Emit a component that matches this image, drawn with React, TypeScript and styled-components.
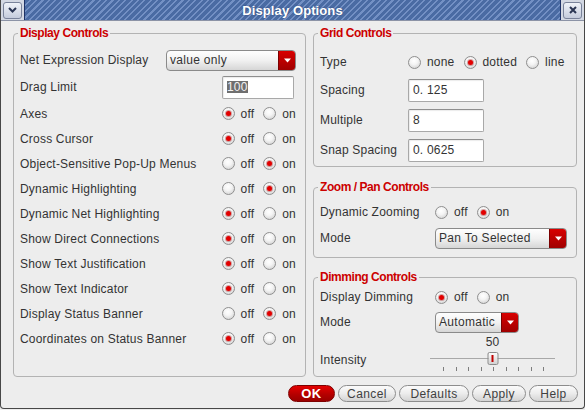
import React from 'react';
import styled, { createGlobalStyle } from 'styled-components';

const GlobalStyle = createGlobalStyle`
  html, body {
    margin: 0;
    padding: 0;
    background: #ededed;
  }
  body {
    font-family: "Liberation Sans", Arial, sans-serif;
  }
`;

const Window = styled.div`
  width: 585px;
  height: 409px;
  box-sizing: border-box;
  display: flex;
  flex-direction: column;
  background: #ededed;
  border: 1px solid #474747;
  border-top: none;
  border-radius: 0 0 4px 4px;
  color: #333;
  font-size: 12px;
  letter-spacing: 0.2px;
`;

const TitleBar = styled.div`
  display: flex;
  align-items: center;
  height: 20px;
  background: #d3d8e3;
  border-bottom: 1px solid #8c93a6;
`;

const TitleButton = styled.div`
  width: 19px;
  height: 17px;
  box-sizing: border-box;
  margin: 0 2px;
  border: 1px solid #79829a;
  border-radius: 3px;
  background: linear-gradient(#f0f3f9, #c4cbdc);
  display: flex;
  align-items: center;
  justify-content: center;
`;

const TitleCaption = styled.div`
  flex: 1;
  height: 20px;
  box-sizing: border-box;
  border-left: 1px solid #1e3266;
  border-right: 1px solid #1e3266;
  background: repeating-linear-gradient(
    135deg,
    #4a6ba3 0px,
    #4a6ba3 3px,
    #7390c4 3px,
    #7390c4 4.5px
  );
  display: flex;
  align-items: center;
  justify-content: center;
  color: #fff;
  font-weight: bold;
  font-size: 13px;
  letter-spacing: 0.1px;
  text-shadow: 0 0 2px #2c4478;
`;

const Body = styled.div`
  display: flex;
  gap: 7px;
  padding: 4px 7px 0 12px;
`;

const Column = styled.div`
  display: flex;
  flex-direction: column;
  width: 264px;
`;

const Group = styled.fieldset<{ $w?: number; $top: number; $bottom: number; $mt?: number }>`
  margin: ${p => p.$mt ?? 0}px 0 0 0;
  min-width: 0;
  width: ${p => (p.$w ? `${p.$w}px` : 'auto')};
  box-sizing: border-box;
  border: 1px solid #b3b3b3;
  border-radius: 4px;
  padding: ${p => p.$top}px 9px ${p => p.$bottom}px 6px;
`;

const Legend = styled.legend`
  padding: 0 2px;
  margin-left: -2px;
  font-weight: bold;
  color: #cc0000;
  font-size: 12px;
  line-height: 16px;
  letter-spacing: -0.45px;
`;

const Row = styled.div<{ $h: number; $label?: number }>`
  display: grid;
  grid-template-columns: ${p => (p.$label ? `${p.$label}px 1fr` : '1fr auto')};
  align-items: center;
  height: ${p => p.$h}px;
`;

const Label = styled.span<{ $shift?: number }>`
  white-space: nowrap;
  margin-top: ${p => p.$shift ?? 0}px;
`;

const Options = styled.div`
  display: flex;
  align-items: center;
  gap: 9px;
`;

const Option = styled.span`
  display: inline-flex;
  align-items: center;
  gap: 6px;
`;

const RadioDot = styled.span<{ $on: boolean }>`
  width: 13px;
  height: 13px;
  box-sizing: border-box;
  border-radius: 50%;
  border: 1px solid #8f8f8f;
  background: radial-gradient(circle at 45% 35%, #ffffff 0%, #f4f4f4 40%, #c9c9c9 100%);
  display: inline-flex;
  align-items: center;
  justify-content: center;
  &::after {
    content: '';
    display: ${p => (p.$on ? 'block' : 'none')};
    width: 5px;
    height: 5px;
    border-radius: 50%;
    background: #e20000;
    box-shadow: 0 0 0 1px rgba(140, 0, 0, 0.35);
  }
`;

const Combo = styled.div<{ $w: number }>`
  width: ${p => p.$w}px;
  height: 21px;
  box-sizing: border-box;
  border: 1px solid #8a8a8a;
  border-radius: 4px;
  background: linear-gradient(#fefefe, #f1f1f1 50%, #d6d6d6);
  display: flex;
  align-items: center;
  overflow: hidden;
  justify-self: start;
`;

const ComboText = styled.span`
  flex: 1;
  padding-left: 3px;
  font-size: 12px;
  letter-spacing: 0.3px;
  white-space: nowrap;
`;

const ComboArrow = styled.span`
  width: 16px;
  align-self: stretch;
  background: linear-gradient(#d80000, #a00000);
  border-left: 1px solid #7a0000;
  display: flex;
  align-items: center;
  justify-content: center;
`;

const Field = styled.div<{ $w: number; $mr?: number }>`
  width: ${p => p.$w}px;
  height: 23px;
  box-sizing: border-box;
  margin-right: ${p => p.$mr ?? 0}px;
  border: 1px solid #a8a8a8;
  border-top-color: #8e8e8e;
  border-radius: 2px;
  background: #fff;
  box-shadow: inset 1px 1px 1px rgba(0, 0, 0, 0.08);
  display: flex;
  align-items: center;
  padding-left: 4px;
  font-size: 12px;
`;

const Selected = styled.span`
  background: #6f6f6f;
  color: #f2f2f2;
  line-height: 12px;
`;

const SliderBox = styled.div`
  position: relative;
  width: 125px;
  height: 41px;
`;

const SliderValue = styled.span`
  position: absolute;
  top: 1px;
  transform: translateX(-50%);
  font-size: 12px;
  line-height: 12px;
`;

const Track = styled.div`
  position: absolute;
  left: 0;
  right: 0;
  top: 23px;
  height: 1px;
  background: #a8a8a8;
`;

const Thumb = styled.div`
  position: absolute;
  top: 17px;
  width: 11px;
  height: 13px;
  box-sizing: border-box;
  transform: translateX(-50%);
  border: 1px solid #8a8a8a;
  border-radius: 2px;
  background: linear-gradient(#fbfbfb, #d2d2d2);
  display: flex;
  justify-content: center;
  align-items: center;
  &::after {
    content: '';
    width: 2px;
    height: 7px;
    background: #c00000;
  }
`;

const Ticks = styled.div`
  position: absolute;
  left: 13px;
  right: 11px;
  top: 32px;
  display: flex;
  justify-content: space-between;
`;

const Tick = styled.span`
  width: 1px;
  height: 4px;
  background: #7d7d7d;
`;

const ButtonRow = styled.div`
  display: flex;
  justify-content: flex-end;
  gap: 3px;
  padding: 8px 6px 0 0;
`;

const Button = styled.div<{ $w: number; $primary?: boolean }>`
  width: ${p => p.$w}px;
  height: 17px;
  box-sizing: border-box;
  border-radius: 9px;
  border: 1px solid ${p => (p.$primary ? '#7e0000' : '#8c8c8c')};
  background: ${p =>
    p.$primary ? 'linear-gradient(#e40000, #b20000 60%, #9a0000)' : 'linear-gradient(#fbfbfb, #ececec 50%, #d3d3d3)'};
  color: ${p => (p.$primary ? '#fff' : '#404040')};
  font-weight: ${p => (p.$primary ? 'bold' : 'normal')};
  font-size: ${p => (p.$primary ? '13px' : '12px')};
  display: flex;
  align-items: center;
  justify-content: center;
  letter-spacing: 0.4px;
`;

const Radio = ({ options, value }: { options: string[]; value: string }) => (
  <Options>
    {options.map(o => (
      <Option key={o}>
        <RadioDot $on={o === value} />
        {o}
      </Option>
    ))}
  </Options>
);

const Select = ({ w, value }: { w: number; value: string }) => (
  <Combo $w={w}>
    <ComboText>{value}</ComboText>
    <ComboArrow>
      <svg width="7" height="5" viewBox="0 0 7 5">
        <path d="M0 0.5 H7 L3.5 4.5 Z" fill="#fff" />
      </svg>
    </ComboArrow>
  </Combo>
);

const Slider = ({ value }: { value: number }) => {
  const pos = `${value}%`;
  return (
    <SliderBox>
      <SliderValue style={{ left: pos }}>{value}</SliderValue>
      <Track />
      <Thumb style={{ left: pos }} />
      <Ticks>
        {Array.from({ length: 9 }).map((_, i) => (
          <Tick key={i} />
        ))}
      </Ticks>
    </SliderBox>
  );
};

const toggles: [string, string][] = [
  ['Axes', 'off'],
  ['Cross Cursor', 'off'],
  ['Object-Sensitive Pop-Up Menus', 'on'],
  ['Dynamic Highlighting', 'on'],
  ['Dynamic Net Highlighting', 'off'],
  ['Show Direct Connections', 'off'],
  ['Show Text Justification', 'off'],
  ['Show Text Indicator', 'off'],
  ['Display Status Banner', 'on'],
  ['Coordinates on Status Banner', 'off'],
];

const OnOff = ['off', 'on'];

export default function App() {
  return (
    <>
      <GlobalStyle />
      <Window>
        <TitleBar>
          <TitleButton>
            <svg width="9" height="6" viewBox="0 0 9 6">
              <path d="M1 1 L4.5 4.5 L8 1" stroke="#2b3654" strokeWidth="2" fill="none" />
            </svg>
          </TitleButton>
          <TitleCaption>Display Options</TitleCaption>
          <TitleButton>
            <svg width="8" height="8" viewBox="0 0 8 8">
              <path d="M1 1 L7 7 M7 1 L1 7" stroke="#2b3654" strokeWidth="2" fill="none" />
            </svg>
          </TitleButton>
        </TitleBar>

        <Body>
          <Group $w={294} $top={6} $bottom={0}>
            <Legend>Display Controls</Legend>
            <Row $h={26}>
              <Label>Net Expression Display</Label>
              <Select w={130} value="value only" />
            </Row>
            <Row $h={28}>
              <Label>Drag Limit</Label>
              <Field $w={72} $mr={2}>
                <Selected>100</Selected>
              </Field>
            </Row>
            {toggles.map(([label, v]) => (
              <Row $h={25} key={label}>
                <Label>{label}</Label>
                <Radio options={OnOff} value={v} />
              </Row>
            ))}
          </Group>

          <Column>
            <Group $top={8} $bottom={1}>
              <Legend>Grid Controls</Legend>
              <Row $h={26} $label={88}>
                <Label>Type</Label>
                <Radio options={['none', 'dotted', 'line']} value="dotted" />
              </Row>
              <Row $h={30} $label={88}>
                <Label>Spacing</Label>
                <Field $w={76}>0. 125</Field>
              </Row>
              <Row $h={30} $label={88}>
                <Label>Multiple</Label>
                <Field $w={76}>8</Field>
              </Row>
              <Row $h={30} $label={88}>
                <Label>Snap Spacing</Label>
                <Field $w={76}>0. 0625</Field>
              </Row>
            </Group>

            <Group $top={4} $bottom={6} $mt={12}>
              <Legend>Zoom / Pan Controls</Legend>
              <Row $h={26} $label={115}>
                <Label>Dynamic Zooming</Label>
                <Radio options={OnOff} value="on" />
              </Row>
              <Row $h={26} $label={115}>
                <Label>Mode</Label>
                <Select w={132} value="Pan To Selected" />
              </Row>
            </Group>

            <Group $top={0} $bottom={0} $mt={11}>
              <Legend>Dimming Controls</Legend>
              <Row $h={24} $label={115}>
                <Label>Display Dimming</Label>
                <Radio options={OnOff} value="off" />
              </Row>
              <Row $h={26} $label={115}>
                <Label>Mode</Label>
                <Select w={84} value="Automatic" />
              </Row>
              <Row $h={41} $label={110}>
                <Label $shift={9}>Intensity</Label>
                <Slider value={50} />
              </Row>
            </Group>
          </Column>
        </Body>

        <ButtonRow>
          <Button $w={47} $primary>OK</Button>
          <Button $w={58}>Cancel</Button>
          <Button $w={70}>Defaults</Button>
          <Button $w={54}>Apply</Button>
          <Button $w={49}>Help</Button>
        </ButtonRow>
      </Window>
    </>
  );
}
